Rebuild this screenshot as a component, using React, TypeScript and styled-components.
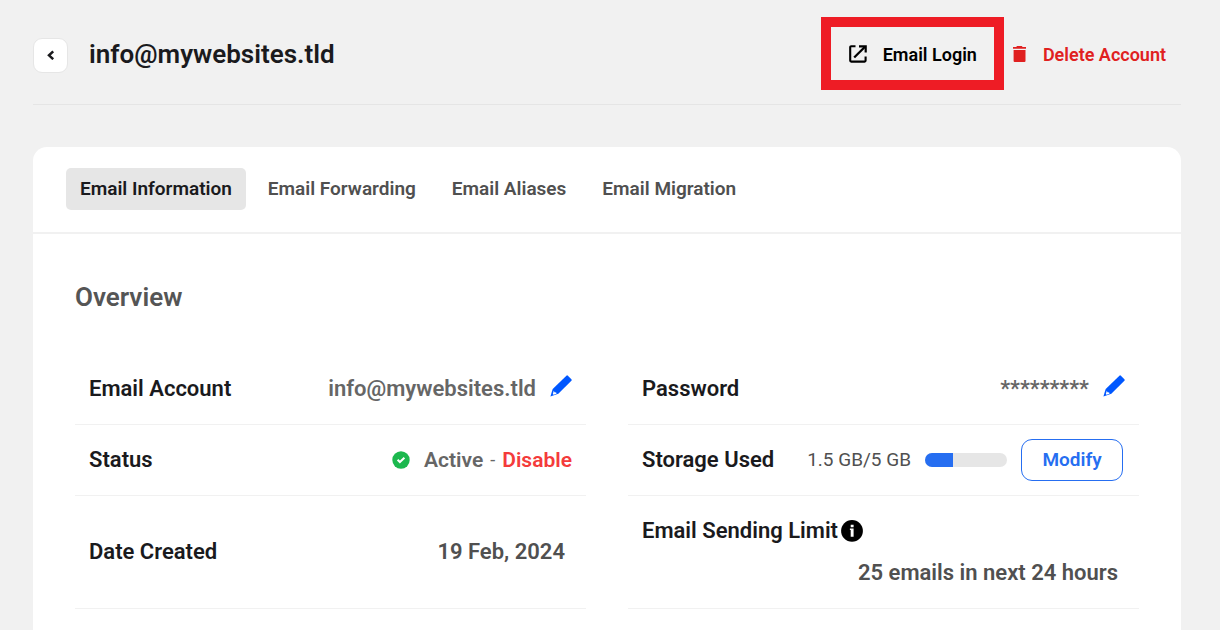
import React from "react";
import styled, { createGlobalStyle } from "styled-components";

const GlobalStyle = createGlobalStyle`
  *, *::before, *::after { box-sizing: border-box; }
  body {
    margin: 0;
    background: #f1f1f1;
    color: #1a1a1d;
    font-family: Roboto, "Liberation Sans", sans-serif;
    overflow-x: hidden;
  }
  button { font-family: inherit; cursor: pointer; }
  h1, h2, dl, dt, dd { margin: 0; }
`;

const Page = styled.main`
  display: flex;
  flex-direction: column;
  gap: 42px;
  min-height: 100vh;
  padding: 0 39px 0 33px;
`;

const Header = styled.header`
  display: flex;
  align-items: center;
  gap: 21px;
  padding: 17px 0 14px;
  border-bottom: 1px solid #e5e5e5;
`;

const BackButton = styled.button`
  display: flex;
  align-items: center;
  justify-content: center;
  width: 35px;
  height: 35px;
  margin-top: 3px;
  padding: 0;
  border: 1px solid #e6e6e6;
  border-radius: 9px;
  background: #fff;
  color: #1a1a1d;
`;

const Title = styled.h1`
  font-size: 26px;
  line-height: 32px;
  font-weight: 600;
`;

const Actions = styled.div`
  display: flex;
  align-items: center;
  gap: 9px;
  margin-left: auto;
  padding-right: 15px;
`;

const ActionLink = styled.a<{ $danger?: boolean; $highlighted?: boolean }>`
  display: flex;
  align-items: center;
  gap: ${(p) => (p.$danger ? "16px" : "13px")};
  padding: ${(p) => (p.$highlighted ? "17px 17px 14px 15px" : "2px 0 0")};
  border: ${(p) => (p.$highlighted ? "10px solid #ee1c25" : "0")};
  color: ${(p) => (p.$danger ? "#e02020" : "#000")};
  font-size: 18px;
  line-height: 22px;
  font-weight: 600;
  text-decoration: none;
`;

const Card = styled.section`
  flex: 1;
  border-radius: 14px 14px 0 0;
  background: #fff;
`;

const Tabs = styled.nav`
  display: flex;
  gap: 8px;
  padding: 21px 33px 22px;
  border-bottom: 2px solid #f1f1f1;
`;

const Tab = styled.button<{ $active?: boolean }>`
  height: 42px;
  padding: 0 14px;
  border: 0;
  border-radius: 5px;
  background: ${(p) => (p.$active ? "#e6e6e6" : "transparent")};
  color: ${(p) => (p.$active ? "#1a1a1d" : "#505050")};
  font-size: 19px;
  line-height: 22px;
  font-weight: 600;
`;

const Overview = styled.div`
  display: flex;
  flex-direction: column;
  gap: 40px;
  padding: 47px 42px 0;
`;

const SectionTitle = styled.h2`
  color: #555;
  font-size: 26px;
  line-height: 32px;
  font-weight: 600;
`;

const Columns = styled.div`
  display: grid;
  grid-template-columns: 1fr 1fr;
  gap: 42px;
`;

const Details = styled.dl`
  display: flex;
  flex-direction: column;
`;

const Row = styled.div<{ $tall?: boolean; $stacked?: boolean }>`
  display: flex;
  flex-direction: ${(p) => (p.$stacked ? "column" : "row")};
  align-items: ${(p) => (p.$stacked ? "stretch" : "center")};
  justify-content: ${(p) => (p.$stacked ? "center" : "space-between")};
  gap: 14px;
  height: ${(p) => (p.$tall ? "113px" : "71px")};
  padding: 0 14px;
  border-bottom: 1px solid #f1f1f1;

  &:first-child { height: 72px; }
`;

const Label = styled.dt`
  display: flex;
  align-items: center;
  gap: 3px;
  font-size: 22px;
  line-height: 28px;
  font-weight: 600;
  white-space: nowrap;
`;

const Value = styled.dd<{ $dark?: boolean; $inset?: boolean }>`
  display: flex;
  align-items: center;
  justify-content: flex-end;
  gap: 14px;
  padding-right: ${(p) => (p.$inset ? "7px" : "0")};
  color: ${(p) => (p.$dark ? "#505050" : "#666")};
  font-size: 22px;
  line-height: 28px;
  font-weight: 600;
  white-space: nowrap;
`;

const StatusText = styled.span`
  display: flex;
  gap: 7px;
  font-size: 21px;
`;

const Dash = styled.span`
  font-size: 18px;
  font-weight: 400;
`;

const TextButton = styled.button`
  padding: 0;
  border: 0;
  background: none;
  color: #f43b3b;
  font-size: 21px;
  line-height: 28px;
  font-weight: 600;
`;

const IconButton = styled.button`
  display: flex;
  padding: 0 0 5px;
  border: 0;
  background: none;
  color: #0057ff;
`;

const Usage = styled.span`
  color: #505050;
  font-size: 19px;
  font-weight: 400;
`;

const Meter = styled.div`
  width: 82px;
  height: 14px;
  border-radius: 7px;
  background: #e6e6e6;
  overflow: hidden;
`;

const MeterFill = styled.div`
  height: 100%;
  background: #266ef1;
`;

const ModifyButton = styled.button`
  width: 102px;
  height: 42px;
  margin-right: 2px;
  border: 1px solid #266ef1;
  border-radius: 11px;
  background: #fff;
  color: #266ef1;
  font-size: 19px;
  line-height: 22px;
  font-weight: 600;
`;

const ChevronIcon = () => (
  <svg width="8" height="10" viewBox="0 0 8 10" fill="none" aria-hidden="true">
    <path d="M6.2 1.400 2 5.300l4.200 3.900" stroke="currentColor" strokeWidth="2.500" />
  </svg>
);

const OpenIcon = () => (
  <svg width="24" height="22" viewBox="0 0 24 22" fill="none" aria-hidden="true">
    <path d="M9.500 2.200H5.200Q4.200 2.200 4.200 3.200v13.400q0 1 1 1h13.400q1 0 1-1V12.500" stroke="currentColor" strokeWidth="2.100" />
    <path d="M8.200 13.500 19 2.700" stroke="currentColor" strokeWidth="2.300" />
    <path d="M13 1.200h7.800v7.400h-2.200V3.400H13z" fill="currentColor" />
  </svg>
);

const TrashIcon = () => (
  <svg width="14" height="18" viewBox="0 0 14 18" fill="currentColor" aria-hidden="true">
    <path d="M4 0h4.800l.8.9H13v1.900H0V.9h3.200zM.6 4h11.900v11q0 1-1 1H1.600Q.6 16 .6 15z" />
  </svg>
);

const PencilIcon = () => (
  <svg width="22" height="22" viewBox="0 0 22 22" aria-hidden="true">
    <path d="M16.400.7q.8-.7 1.500 0l3.500 3.500q.7.8 0 1.500L8.300 18.700.4 21.600 2.700 14.100z" fill="#0057ff" />
    <path d="m3.800 15.800.7 1.400 1.700.3.300 1.300-3 1-.7-.8z" fill="#fff" />
  </svg>
);

const CheckIcon = () => (
  <svg width="18" height="18" viewBox="0 0 18 18" aria-hidden="true">
    <circle cx="9" cy="9" r="8.700" fill="#1cb84e" />
    <path d="m5.600 8.700 2.300 2.300 4.500-4.300" fill="none" stroke="#fff" strokeWidth="2" />
  </svg>
);

const InfoIcon = () => (
  <svg width="22" height="22" viewBox="0 0 22 22" role="img" aria-label="More information">
    <circle cx="11" cy="10.900" r="10.900" fill="#000" />
    <path d="M9.700 4.800h2.900v2.400H9.700zM8.900 8.600h3.700v8.200H9.700v-6.800h-.8z" fill="#fff" />
  </svg>
);

const tabs = ["Email Information", "Email Forwarding", "Email Aliases", "Email Migration"];
const used = 1.7;
const quota = 5;

export default function App() {
  return (
    <>
      <GlobalStyle />
      <Page>
        <Header>
          <BackButton type="button" aria-label="Back">
            <ChevronIcon />
          </BackButton>
          <Title>info@mywebsites.tld</Title>
          <Actions>
            <ActionLink href="#login" $highlighted>
              <OpenIcon />
              Email Login
            </ActionLink>
            <ActionLink href="#delete" $danger>
              <TrashIcon />
              Delete Account
            </ActionLink>
          </Actions>
        </Header>

        <Card>
          <Tabs aria-label="Email settings">
            {tabs.map((name, i) => (
              <Tab key={name} type="button" $active={i === 0}>
                {name}
              </Tab>
            ))}
          </Tabs>

          <Overview>
            <SectionTitle>Overview</SectionTitle>
            <Columns>
              <Details>
                <Row>
                  <Label>Email Account</Label>
                  <Value>
                    info@mywebsites.tld
                    <IconButton type="button" aria-label="Edit email account">
                      <PencilIcon />
                    </IconButton>
                  </Value>
                </Row>
                <Row>
                  <Label>Status</Label>
                  <Value>
                    <CheckIcon />
                    <StatusText>
                      Active <Dash>-</Dash>
                      <TextButton type="button">Disable</TextButton>
                    </StatusText>
                  </Value>
                </Row>
                <Row $tall>
                  <Label>Date Created</Label>
                  <Value $dark $inset>19 Feb, 2024</Value>
                </Row>
              </Details>

              <Details>
                <Row>
                  <Label>Password</Label>
                  <Value>
                    *********
                    <IconButton type="button" aria-label="Edit password">
                      <PencilIcon />
                    </IconButton>
                  </Value>
                </Row>
                <Row>
                  <Label>Storage Used</Label>
                  <Value>
                    <Usage>1.5 GB/5 GB</Usage>
                    <Meter role="progressbar" aria-label="Storage used" aria-valuenow={used} aria-valuemax={quota}>
                      <MeterFill style={{ width: `${(used / quota) * 100}%` }} />
                    </Meter>
                    <ModifyButton type="button">Modify</ModifyButton>
                  </Value>
                </Row>
                <Row $tall $stacked>
                  <Label>
                    Email Sending Limit
                    <InfoIcon />
                  </Label>
                  <Value $dark $inset>25 emails in next 24 hours</Value>
                </Row>
              </Details>
            </Columns>
          </Overview>
        </Card>
      </Page>
    </>
  );
}
